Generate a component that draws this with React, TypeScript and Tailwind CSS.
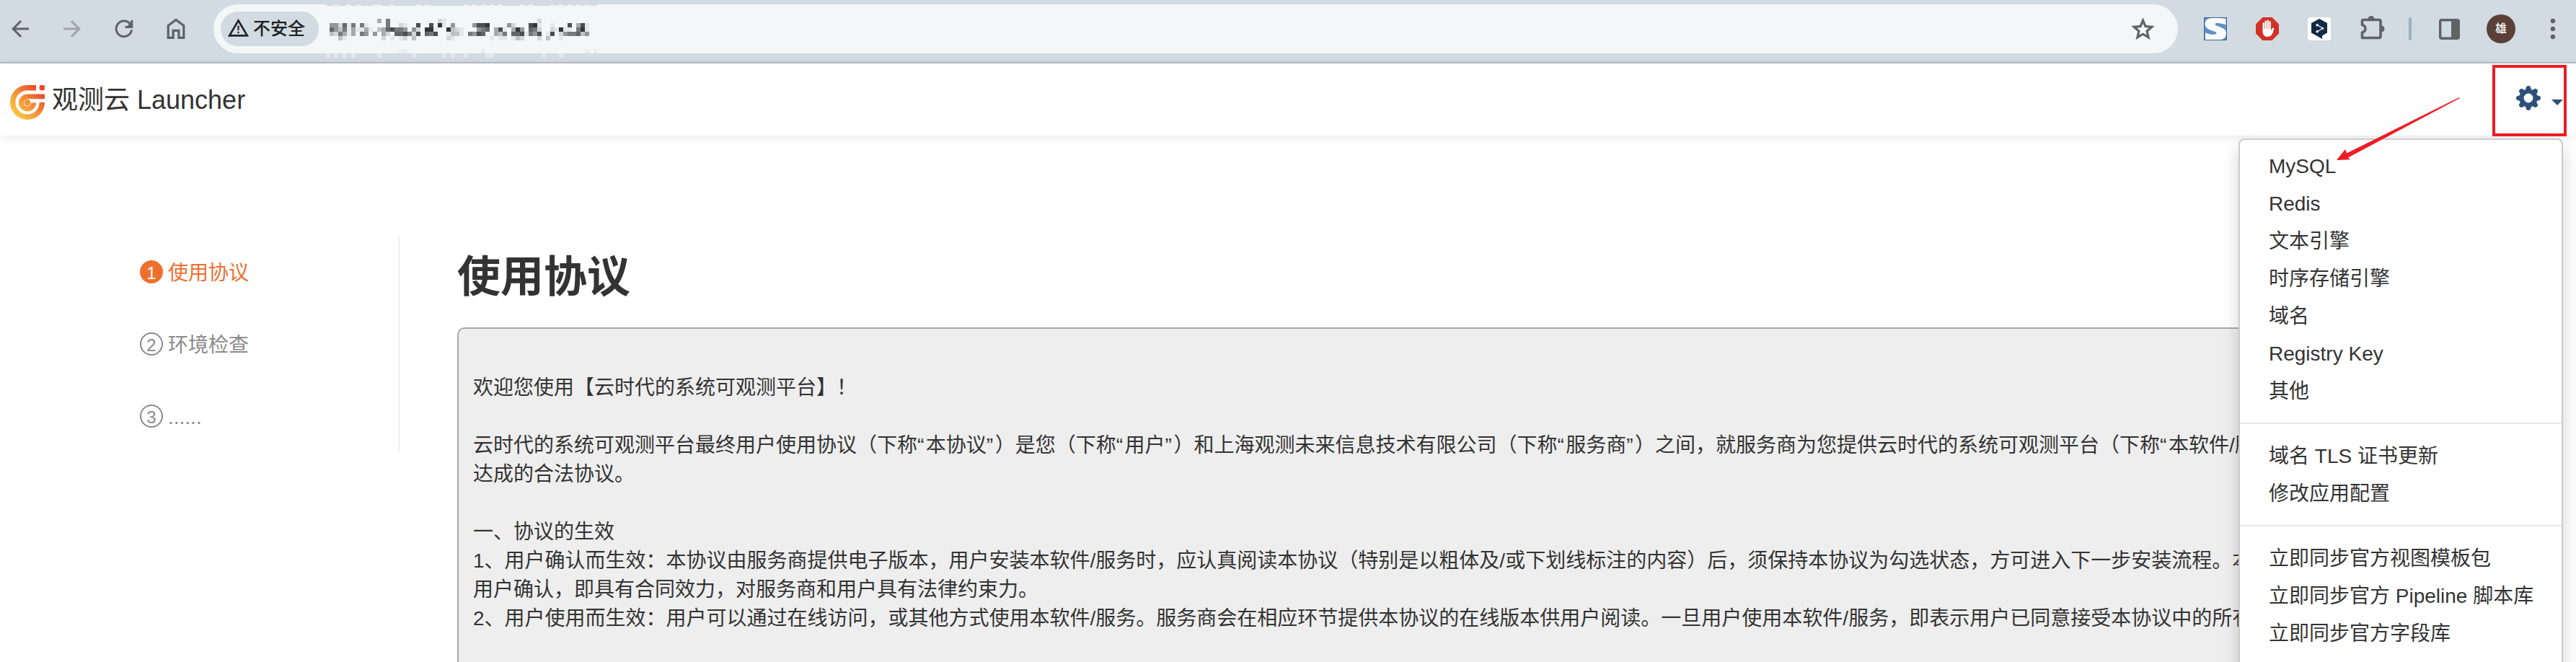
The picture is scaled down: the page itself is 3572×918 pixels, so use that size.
import React from "react";
import { MdArrowBack, MdArrowForward, MdRefresh } from "react-icons/md";

const CELLS: [number, number, string][] = [
  [0, 11, "4.6"], [0, 25, "21"], [0, 48, "2"],
  [1, 0, "55271606"], [1, 8, "1"], [1, 13, "6"], [1, 16, "21"], [1, 20, "8"], [1, 23, "8.91"], [1, 28, "5"],
  [1, 33, "5889"], [1, 41, "52"], [1, 46, "891"], [1, 51, "1"], [1, 55, "8"], [1, 57, "481"],
  [2, 0, "7536141141"], [2, 11, "3478665"], [2, 19, "52"], [2, 22, "991"], [2, 27, "9321"],
  [2, 34, "567"], [2, 38, "481"], [2, 42, "495"], [2, 46, "762"], [2, 51, "21911.691"],
  [3, 0, "326414.61"], [3, 8, "5"], [3, 10, "5.42"], [3, 15, "778628"], [3, 22, "768"], [3, 27, "1331"],
  [3, 32, "6587"], [3, 38, "436.778165"], [3, 48, "8"], [3, 50, "18.2566735"],
  [4, 2, "31"], [4, 12, "2.1.12.3"], [4, 27, "21"], [4, 37, "1.11.132"], [4, 48, "2"], [4, 50, "3..1"],
];
const SHADES = ["#f3f7f8", "#e4e8ea", "#d3d6d9", "#bfc2c4", "#a8aaac", "#939596", "#78797b", "#646567", "#4c4d50", "#34353a"];
const EDGE_TOP = [463, 480, 495, 517, 523, 540, 577, 589, 643, 654, 667, 679, 691, 721, 733, 763, 775, 787, 799, 811];
const EDGE_BOTTOM = [452, 463, 475, 487, 523, 571, 613, 625, 643, 673, 679, 751, 775];

function Redacted() {
  return (
    <svg width="388" height="80" viewBox="446 0 388 80" shapeRendering="crispEdges" className="shrink-0 overflow-visible">
      <rect x="452" y="6" width="376" height="2" fill="#d1dbe1" />
      {EDGE_TOP.map((x) => <rect key={x} x={x} y="6" width="6" height="2" fill="#e6edf0" />)}
      {EDGE_BOTTOM.map((x) => <rect key={x} x={x} y="74" width="6" height="6" fill="#e0e8ec" />)}
      <rect x="553" y="68" width="12" height="6" fill="#e9edef" />
      <rect x="667" y="68" width="6" height="6" fill="#e9edef" />
      <rect x="811" y="68" width="6" height="6" fill="#e9edef" />
      <rect x="823" y="68" width="6" height="6" fill="#e9edef" />
      {CELLS.flatMap(([row, col, run]) =>
        run.split("").map((c, i) =>
          c === "." ? null : (
            <rect key={`${row}-${col}-${i}`} x={457 + (col + i) * 6} y={26 + row * 6} width="6" height="6" fill={SHADES[Number(c)]} />
          ),
        ),
      )}
    </svg>
  );
}

function Slot({ children, className = "w-[72px]" }: { children: React.ReactNode; className?: string }) {
  return <div className={`flex h-20 shrink-0 items-center justify-center ${className}`}>{children}</div>;
}

function BrowserBar() {
  return (
    <div className="flex h-[88px] items-start border-b-2 border-[#b6c0c9] bg-[#d1dbe1] text-[#5f6368]">
      <Slot className="w-14"><MdArrowBack size={36} /></Slot>
      <Slot className="ml-2 w-[72px]"><MdArrowForward size={36} className="text-[#9ea5ab]" /></Slot>
      <Slot>
        <svg width="26" height="26" viewBox="0 0 26 26" fill="none" stroke="currentColor" strokeWidth="3">
          <path d="M23.600 14.500A10.800 10.800 0 1 1 21.500 6.300" />
          <path d="M23.800 1v9.500H14.500" />
          <path d="M23 3v7h-6Z" fill="currentColor" stroke="none" />
        </svg>
      </Slot>
      <Slot>
        <svg width="26" height="30" viewBox="0 0 26 30" fill="none" stroke="currentColor" strokeWidth="3.2">
          <path d="M2.2 27.4V10.5L13 2.4l10.8 8.1v16.9h-6.900v-10H9.100v10Z" />
        </svg>
      </Slot>
      <div className="ml-4 mt-1.5 flex h-[68px] w-[2724px] shrink-0 items-center rounded-full bg-[#f3f7f8] pl-2.5">
        <div className="flex h-12 w-[136px] shrink-0 items-center gap-2.5 rounded-full bg-[#d1dbe1] pl-2.5 text-[#202124]">
          <svg width="29" height="25" viewBox="0 0 29 25" className="mb-1 shrink-0">
            <path d="M14.5 2.5 26.8 23.4H2.2Z" fill="none" stroke="currentColor" strokeWidth="2.6" />
            <path d="M14.5 9.5v6.5M14.5 17.8v2.4" stroke="currentColor" strokeWidth="2.2" />
          </svg>
          <span className="-ml-1 whitespace-nowrap text-[24px] leading-[48px] font-medium">不安全</span>
        </div>
        <div className="ml-1 flex h-20"><Redacted /></div>
        <svg width="39" height="39" viewBox="0 0 24 24" className="mr-[29px] ml-auto shrink-0">
          <path
            fill="currentColor"
            fillRule="evenodd"
            d="M12 17.27 18.18 21l-1.64-7.03L22 9.24l-7.19-.61L12 2 9.19 8.63 2 9.24l5.46 4.73L5.82 21ZM12 15.0l-3.2 1.95.85-3.65-2.8-2.45 3.7-.35L12 7.1l1.45 3.4 3.7.35-2.8 2.45.85 3.65Z"
          />
        </svg>
      </div>
      <Slot className="ml-4 w-[72px]">
        <svg width="32" height="32" viewBox="0 0 32 32">
          <rect x=".5" y=".5" width="31" height="31" fill="#5c92c8" stroke="#3d6797" />
          <path d="M30.500 2v8.500C24 8 16.500 7 15.500 9.500 15 13 31 13 31 21.500c0 5.500-3 8.500-6.500 9.500H2V21.500c7 3 15.500 3 15.500.5C17.500 18.500 1.500 18.500 1.500 9.500 1.500 4 5.500 1 12 1c6 0 12-.5 18.500 1Z" fill="#fbfcfe" />
        </svg>
      </Slot>
      <Slot>
        <svg width="32" height="32" viewBox="0 0 32 32">
          <path d="M9.5 0h13L32 9.5v13L22.5 32h-13L0 22.500v-13Z" fill="#d23124" />
          <g stroke="#fff" strokeWidth="2.4" strokeLinecap="round">
            <path d="M10.700 8.500V18M13.700 5.800V18M16.700 5V18M19.700 6.500V18" />
          </g>
          <path d="M9.500 16h11.400v2.500l1.800-3.200c.9-1.500 3-.9 2.500.9C24 21 22.500 27 16 27c-4.500 0-6.500-3.500-6.500-8Z" fill="#fff" />
        </svg>
      </Slot>
      <Slot>
        <svg width="32" height="32" viewBox="0 0 32 32">
          <rect width="32" height="32" rx="3.500" fill="#fff" />
          <path d="M16 2 27 8v13.500l-7 4V30l-5.500-3.300L5 21.500V8Z" fill="#142a45" />
          <path d="M13.300 10.800 21 15.200l-7.500 4.500" fill="none" stroke="#fff" strokeWidth="1.200" />
          <circle cx="13.200" cy="10.800" r="1.800" fill="#fff" />
          <circle cx="20.700" cy="15.300" r="1.500" fill="#fff" />
          <circle cx="13.200" cy="19.700" r="1.800" fill="#fff" />
        </svg>
      </Slot>
      <Slot>
        <svg width="34" height="34" viewBox="0 0 34 34" className="mb-1 ml-1 overflow-visible">
          <path d="M4 6.500h22.500a1.500 1.500 0 0 1 1.500 1.500v22a1.500 1.500 0 0 1-1.500 1.500H2.500V24c6-1.500 6-9 0-10.500V8A1.500 1.500 0 0 1 4 6.500Z" fill="none" stroke="currentColor" strokeWidth="3.600" strokeLinejoin="round" />
          <path d="M10.500 5.500a4.500 4.500 0 0 1 9 0ZM29 14.500a4.500 4.500 0 0 1 0 9Z" fill="currentColor" />
        </svg>
      </Slot>
      <Slot className="w-9"><div className="h-8 w-1 rounded-full bg-[#98b1c0]" /></Slot>
      <Slot>
        <svg width="29" height="29" viewBox="0 0 29 29">
          <rect x="1.700" y="1.700" width="25.600" height="25.600" rx="2" fill="none" stroke="currentColor" strokeWidth="3.400" />
          <path d="M17 2h9v25h-9Z" fill="currentColor" />
        </svg>
      </Slot>
      <Slot>
        <div className="flex size-10 items-center justify-center rounded-full bg-[#5a4037] text-[16px] leading-none font-medium text-white">雄</div>
      </Slot>
      <Slot className="w-[68px] pl-1">
        <svg width="8" height="30" viewBox="0 0 8 30" fill="currentColor">
          <circle cx="4" cy="4" r="3.200" /><circle cx="4" cy="15" r="3.200" /><circle cx="4" cy="26" r="3.200" />
        </svg>
      </Slot>
    </div>
  );
}

function Logo() {
  return (
    <svg width="48" height="48" viewBox="0 0 48 48" className="mt-2 shrink-0">
      <defs>
        <linearGradient id="brand" gradientUnits="userSpaceOnUse" x1="6" y1="42" x2="40" y2="8">
          <stop offset="0" stopColor="#f9c846" />
          <stop offset=".45" stopColor="#f39a3a" />
          <stop offset="1" stopColor="#ea4a28" />
        </linearGradient>
      </defs>
      <g fill="none" stroke="url(#brand)">
        <path d="M36 3.700H24A20.300 20.300 0 1 0 44.300 24" strokeWidth="7.400" />
        <path d="M48 15.800H24A8.600 8.600 0 1 0 32.600 24.500" strokeWidth="6.800" />
      </g>
      <circle cx="24" cy="24.200" r="4.500" fill="#f3983a" />
      <circle cx="44.500" cy="3.500" r="4" fill="#ea4a28" />
    </svg>
  );
}

function Header() {
  return (
    <header className="flex h-[100px] items-center bg-white pl-3.5 shadow-[0_2px_12px_rgba(0,0,0,0.09)]">
      <Logo />
      <span className="mt-0.5 ml-2.5 text-[36px] leading-[50px] whitespace-nowrap">观测云 Launcher</span>
      <div className="mt-[3px] mr-[13px] ml-auto flex h-[99px] w-[103px] items-center border-4 border-[#ee1c25] pl-[29px] text-[#2c5079]">
        <svg width="34" height="34" viewBox="-17 -17 34 34" className="mb-2 shrink-0">
          <g fill="currentColor">
            {[0, 45, 90, 135, 180, 225, 270, 315].map((a) => (
              <path key={a} d="M-4.300 -11 -2.500-16.200Q0-17.800 2.500-16.200L4.300-11Z" transform={`rotate(${a})`} />
            ))}
          </g>
          <circle r="9.500" fill="none" stroke="currentColor" strokeWidth="6.200" />
        </svg>
        <svg width="16" height="8" viewBox="0 0 16 8" className="mt-[5px] ml-[15px] shrink-0"><path d="M0 0h16L8 8Z" fill="currentColor" /></svg>
      </div>
    </header>
  );
}

const STEPS = ["使用协议", "环境检查", "......"];

function Steps() {
  return (
    <nav className="ml-[194px] flex h-[300px] w-[360px] shrink-0 flex-col border-r-2 border-[#ededed] pt-[29px] text-[28px]">
      {STEPS.map((label, i) => (
        <div key={label} className={`mb-[60px] flex h-10 items-center gap-[7px] ${i === 0 ? "text-[#ee6f2d]" : "text-[#8a8a8a]"}`}>
          <span
            className={`flex size-8 items-center justify-center rounded-full text-[24px] leading-none ${
              i === 0 ? "bg-[#ee6f2d] text-white" : "border-2 border-[#8a8a8a]"
            }`}
          >
            <span className="mt-1">{i + 1}</span>
          </span>
          <span className="mt-[3px] leading-10">{label}</span>
        </div>
      ))}
    </nav>
  );
}

const AGREEMENT = [
  "欢迎您使用【云时代的系统可观测平台】！",
  "",
  "云时代的系统可观测平台最终用户使用协议（下称“本协议”）是您（下称“用户”）和上海观测未来信息技术有限公司（下称“服务商”）之间，就服务商为您提供云时代的系统可观测平台（下称“本软件/服",
  "达成的合法协议。",
  "",
  "一、协议的生效",
  "1、用户确认而生效：本协议由服务商提供电子版本，用户安装本软件/服务时，应认真阅读本协议（特别是以粗体及/或下划线标注的内容）后，须保持本协议为勾选状态，方可进入下一步安装流程。本",
  "用户确认，即具有合同效力，对服务商和用户具有法律约束力。",
  "2、用户使用而生效：用户可以通过在线访问，或其他方式使用本软件/服务。服务商会在相应环节提供本协议的在线版本供用户阅读。一旦用户使用本软件/服务，即表示用户已同意接受本协议中的所有",
];

function Line({ text }: { text: string }) {
  return (
    <p className="h-10 whitespace-nowrap">
      {text.split(/([“”])/).map((part, i) =>
        part === "“" || part === "”" ? <span key={i} className="tracking-[2.5px]">{part}</span> : part,
      )}
    </p>
  );
}

const MENU = [
  ["MySQL", "Redis", "文本引擎", "时序存储引擎", "域名", "Registry Key", "其他"],
  ["域名 TLS 证书更新", "修改应用配置"],
  ["立即同步官方视图模板包", "立即同步官方 Pipeline 脚本库", "立即同步官方字段库"],
];

function SettingsMenu() {
  return (
    <div className="absolute top-[192px] left-[3104px] h-[800px] w-[450px] rounded-lg border-2 border-[#cccccc] bg-white pt-2.5 shadow-[0_12px_24px_rgba(0,0,0,0.175)]">
      {MENU.map((group, g) => (
        <ul key={g} className={g === 0 ? "" : "mt-[18px] border-t-2 border-[#e5e5e5] pt-[18px]"}>
          {group.map((item) => (
            <li key={item} className="h-[52px] pt-px pl-10 text-[28px] leading-[52px] whitespace-nowrap">{item}</li>
          ))}
        </ul>
      ))}
    </div>
  );
}

export default function App() {
  return (
    <div className="relative h-[918px] w-[3572px] overflow-hidden bg-white font-['Liberation_Sans','Noto_Sans_CJK_SC',sans-serif] text-[#333333]">
      <BrowserBar />
      <Header />
      <main className="flex items-start pt-[140px]">
        <Steps />
        <section className="ml-20 w-[2780px] shrink-0">
          <h1 className="mt-3 h-[114px] text-[60px] leading-[90px] font-bold">使用协议</h1>
          <div className="h-[600px] overflow-hidden rounded-[10px] border-2 border-[#a9a9a9] bg-[#eeeeee] pt-[62px] pl-5 text-[28px] leading-10">
            {AGREEMENT.map((text, i) => <Line key={i} text={text} />)}
          </div>
        </section>
      </main>
      <SettingsMenu />
      <svg width="180" height="96" viewBox="3236 130 180 96" className="absolute top-[130px] left-[3236px]">
        <path d="M3240 222 3252 207l2 5.500L3410 135l1 1L3256 218.500l3 2.800Z" fill="#ee1c25" />
      </svg>
    </div>
  );
}
